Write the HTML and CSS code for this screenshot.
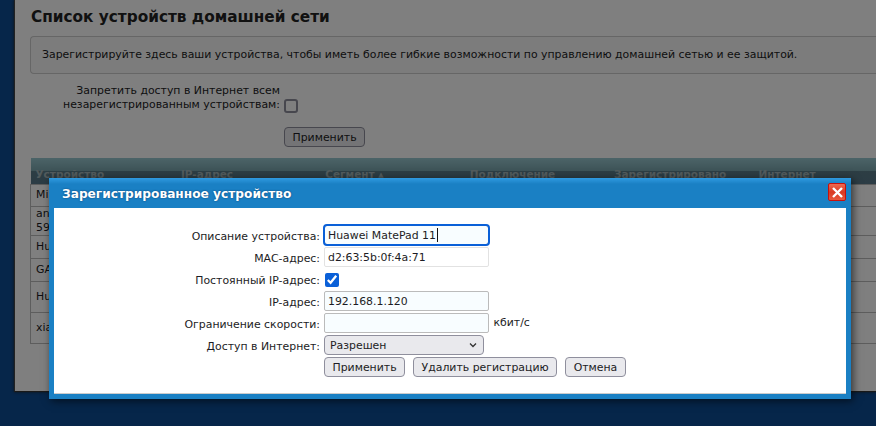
FILE: index.html
```html
<!DOCTYPE html>
<html lang="en">

<head>
    <meta charset="UTF-8">
    <title>Список устройств домашней сети</title>
    <link rel="stylesheet" href="styles.css">
</head>

<body>
    <div class="panel">
        <h2 class="title">Список устройств домашней сети</h2>
        <div class="note">Зарегистрируйте здесь ваши устройства, чтобы иметь более гибкие возможности по управлению домашней сетью и ее защитой.</div>

        <div class="deny">
            <div class="deny-label">Запретить доступ в Интернет всем<br>незарегистрированным устройствам:</div>
            <input type="checkbox" class="deny-check">
        </div>
        <div class="deny-apply"><button class="btn">Применить</button></div>

        <table class="devices">
            <thead>
                <tr>
                    <th>Устройство</th>
                    <th>IP-адрес</th>
                    <th>Сегмент <span class="sort">▲</span></th>
                    <th>Подключение</th>
                    <th>Зарегистрировано</th>
                    <th class="last">Интернет</th>
                </tr>
            </thead>
            <tbody>
                <tr class="r1"><td>Mi</td><td></td><td></td><td></td><td></td><td></td></tr>
                <tr class="r2"><td>an<br>59</td><td></td><td></td><td></td><td></td><td></td></tr>
                <tr class="r3"><td>Hu</td><td></td><td></td><td></td><td></td><td></td></tr>
                <tr class="r3"><td>GA</td><td></td><td></td><td></td><td></td><td></td></tr>
                <tr class="r4"><td>Hu</td><td></td><td></td><td></td><td></td><td></td></tr>
                <tr class="r4"><td>xia</td><td></td><td></td><td></td><td></td><td></td></tr>
            </tbody>
        </table>
    </div>

    <div class="dim"></div>

    <div class="dialog">
        <div class="dialog-head">
            <span class="dialog-title">Зарегистрированное устройство</span>
            <button class="close">
                <svg width="13" height="13" viewBox="0 0 13 13">
                    <path d="M2 2l9 9M11 2l-9 9" stroke="#fff" stroke-width="2.4" fill="none"/>
                </svg>
            </button>
        </div>
        <div class="dialog-body">
            <label class="lbl">Описание устройства:</label>
            <div class="field-wrap">
                <input type="text" class="field focused" value="Huawei MatePad 11">
                <span class="caret"></span>
            </div>

            <label class="lbl">МАС-адрес:</label>
            <div><input type="text" class="field readonly" value="d2:63:5b:0f:4a:71" readonly></div>

            <label class="lbl">Постоянный IP-адрес:</label>
            <div><input type="checkbox" class="check" checked></div>

            <label class="lbl">IP-адрес:</label>
            <div><input type="text" class="field" value="192.168.1.120"></div>

            <label class="lbl">Ограничение скорости:</label>
            <div><input type="text" class="field"> <span class="unit">кбит/с</span></div>

            <label class="lbl">Доступ в Интернет:</label>
            <div class="select-wrap">
                <select class="select">
                    <option>Разрешен</option>
                </select>
                <svg class="chevron" width="8" height="6" viewBox="0 0 8 6">
                    <path d="M1 1.5l3 3 3-3" stroke="#333" stroke-width="1.3" fill="none"/>
                </svg>
            </div>

            <div></div>
            <div class="actions">
                <button class="btn">Применить</button>
                <button class="btn">Удалить регистрацию</button>
                <button class="btn">Отмена</button>
            </div>
        </div>
    </div>
</body>

</html>
```

FILE: styles.css
```css
* {
    box-sizing: border-box;
    font-family: "DejaVu Sans", sans-serif;
}

html, body {
    height: 100%;
}

body {
    margin: 0;
    overflow: hidden;
    background: #0d4c94;
    color: #1c1c24;
    font-size: 10.9px;
}

.panel {
    height: 392px;
    margin-left: 14px;
    padding: 8px 0 8px 15px;
    background: #fff;
    border-left: 1px solid #444;
    border-bottom: 1px solid #333;
    box-shadow: 0 0 3px #222;
    overflow: hidden;
}

.title {
    margin: 0 0 0 1px;
    font-size: 15.3px;
    line-height: 19px;
    color: #222;
}

.note {
    height: 38px;
    margin-top: 9px;
    padding: 0 11px;
    line-height: 36px;
    background: #f9f9f9;
    border: 1px solid #ccc;
    border-right: 0;
    border-radius: 4px 0 0 4px;
}

.deny {
    display: flex;
    align-items: flex-end;
    margin-top: 10px;
}

.deny-label {
    width: 250px;
    line-height: 14px;
    text-align: right;
}

.deny-check {
    width: 14px;
    height: 14px;
    margin: 0 0 -1px 4px;
    appearance: none;
    background: #fff;
    border: 2px solid #8f8f9d;
    border-radius: 3px;
}

.deny-apply {
    margin: 15px 0 0 254px;
}

.btn {
    height: 20px;
    padding: 1px 7.5px 0;
    font-size: 10.9px;
    color: #1c1c24;
    background: #e9e9ed;
    border: 1px solid #8f8f9d;
    border-radius: 4px;
}

.devices {
    width: 100%;
    margin-top: 11px;
    border-collapse: collapse;
    table-layout: fixed;
}

.devices th {
    width: 144.4px;
    height: 26px;
    padding: 6px 5px 0 6px;
    text-align: left;
    font-size: 10.5px;
    font-weight: bold;
    color: #a4b6ba;
    background: linear-gradient(#98c8d0, #7ba6ae 50%, #5a7c88 50%, #58788a);
}

.devices th:first-child {
    padding-left: 5px;
}

.devices th.last {
    width: auto;
}

.sort {
    font-size: 7px;
    vertical-align: 1px;
}

.devices td {
    padding: 0 5px;
    line-height: 14px;
    border: 1px solid #bbb;
    border-left: 0;
    border-right: 0;
}

.devices td:first-child {
    border-left: 1px solid #bbb;
}

.devices .r1 td { height: 22px; }
.devices .r2 td { height: 29px; }
.devices .r3 td { height: 23px; }
.devices .r4 td { height: 31px; }

.dim {
    position: fixed;
    inset: 0;
    background: rgba(0, 0, 0, .5);
}

.dialog {
    position: absolute;
    left: 49px;
    top: 178px;
    width: 802px;
    height: 221px;
    padding: 0 5px 5px;
    background: #1a80c4;
    box-shadow: 2px 2px 8px rgba(0, 0, 0, .6);
}

.dialog-head {
    display: flex;
    justify-content: space-between;
    align-items: center;
    height: 30px;
    margin: 0 -5px;
    padding: 0 5px 0 13px;
    font-size: 12.2px;
    font-weight: bold;
    color: #fff;
    text-shadow: 0 0 2px #0a3c70;
    background: linear-gradient(#2f9ae0, #1a80c4 6px);
}

.dialog-title {
    padding-top: 1px;
}

.close {
    display: flex;
    align-items: center;
    justify-content: center;
    width: 18px;
    height: 18px;
    margin-bottom: 2px;
    padding: 0;
    background: linear-gradient(#f06a50, #d83a22 50%, #e8583c);
    border: 1px solid #c8100c;
    border-radius: 2px;
}

.dialog-body {
    display: grid;
    grid-template-columns: 266px 1fr;
    grid-auto-rows: 20px;
    row-gap: 2px;
    align-items: center;
    column-gap: 4px;
    height: 186px;
    padding-top: 17px;
    background: #fff;
    border-bottom: 1px solid #ccc;
}

.lbl {
    padding-top: 2px;
    text-align: right;
}

.field-wrap {
    position: relative;
}

.field {
    width: 165px;
    height: 20px;
    padding: 1px 3px 0;
    font-size: 10.9px;
    color: #1c1c24;
    background: #f8fdff;
    border: 1px solid #bbb;
    border-radius: 2px;
    outline: none;
    vertical-align: top;
}

.focused {
    outline: 2px solid #0a60d8;
    outline-offset: -1px;
    border-radius: 3px;
}

.readonly {
    background: #fff;
    border-color: #e2e2e2;
}

.caret {
    position: absolute;
    left: 113px;
    top: 3px;
    width: 1px;
    height: 14px;
    background: #111;
}

.check {
    display: block;
    width: 14px;
    height: 14px;
    margin: 2px 0 0 1px;
    accent-color: #0a60d8;
}

.unit {
    margin-left: 1px;
    line-height: 20px;
}

.select-wrap {
    position: relative;
    width: 160px;
}

.select {
    display: block;
    width: 160px;
    height: 20px;
    padding: 1px 5px 0;
    font-size: 10.9px;
    color: #1c1c24;
    appearance: none;
    background: #e9e9ed;
    border: 1px solid #8f8f9d;
    border-radius: 4px;
}

.chevron {
    position: absolute;
    right: 7px;
    top: 7px;
}

.actions {
    display: flex;
    gap: 8px;
}
```
